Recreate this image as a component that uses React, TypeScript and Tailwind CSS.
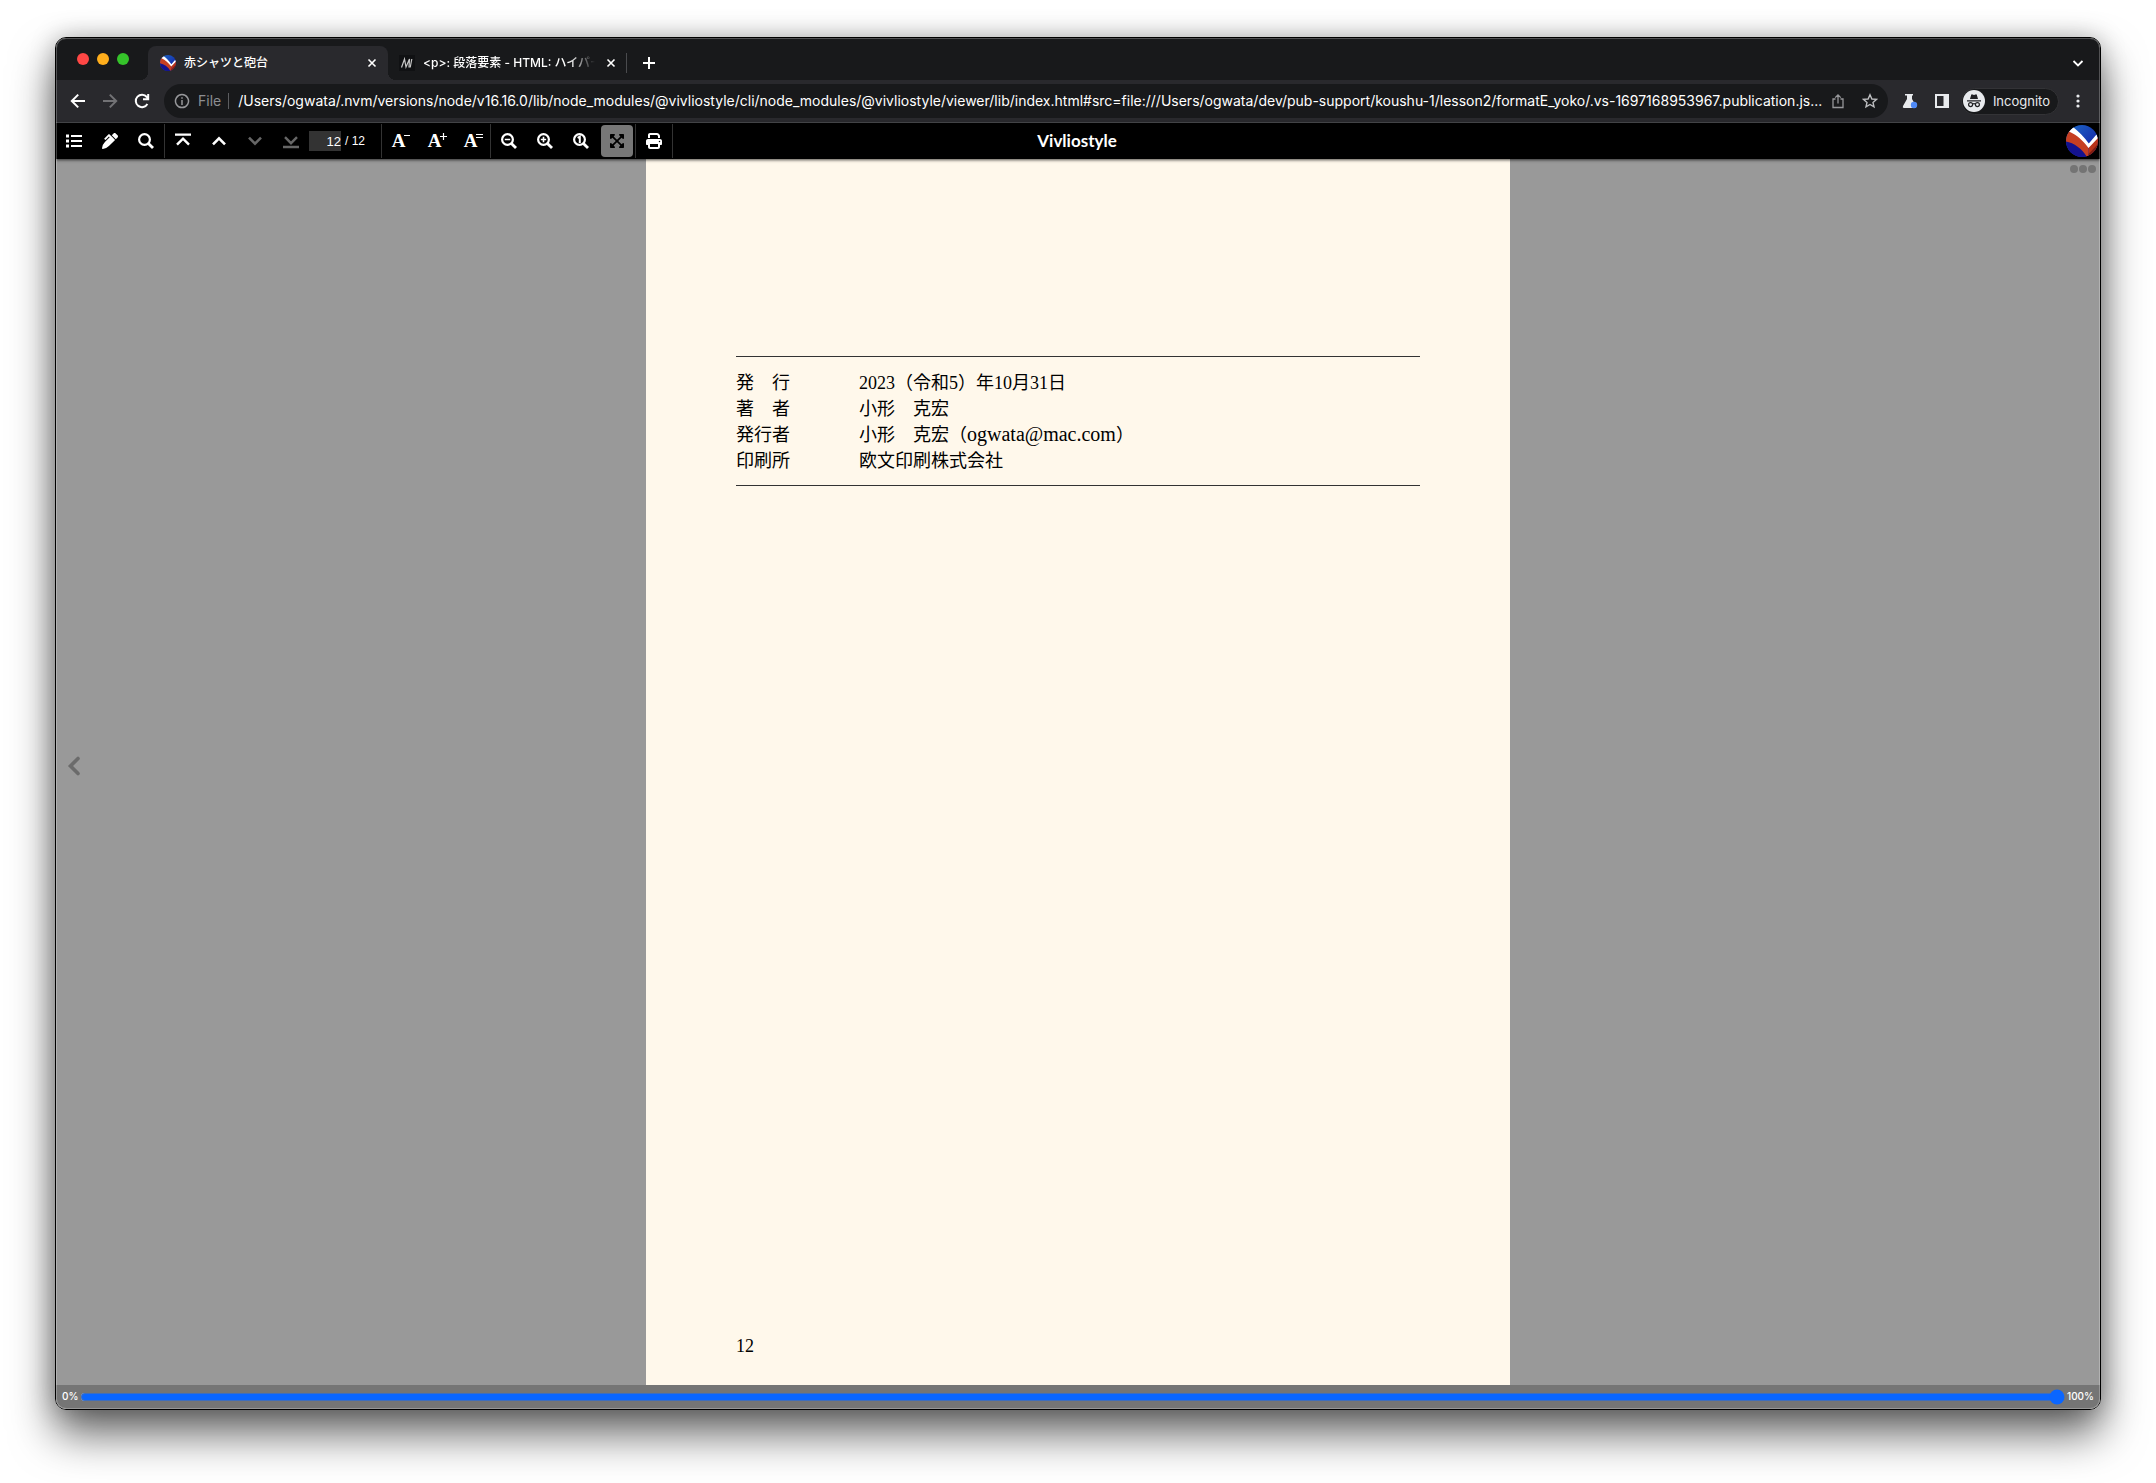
import type { ReactNode } from "react";
import { FaPenAlt, FaExpandArrowsAlt } from "react-icons/fa";
import { FaPrint } from "react-icons/fa6";

const URL_TEXT =
  "/Users/ogwata/.nvm/versions/node/v16.16.0/lib/node_modules/@vivliostyle/cli/node_modules/@vivliostyle/viewer/lib/index.html#src=file:///Users/ogwata/dev/pub-support/koushu-1/lesson2/formatE_yoko/.vs-1697168953967.publication.js...";

const COLOPHON: { label: string; value: ReactNode }[] = [
  { label: "発　行", value: "2023（令和5）年10月31日" },
  { label: "著　者", value: "小形　克宏" },
  {
    label: "発行者",
    value: (
      <>
        小形　克宏（<span className="text-xl leading-none">ogwata@mac.com</span>）
      </>
    ),
  },
  { label: "印刷所", value: "欧文印刷株式会社" },
];

function VivlioLogo({ id, className }: { id: string; className: string }) {
  return (
    <svg viewBox="0 0 32 32" className={className} aria-hidden="true">
      <defs>
        <clipPath id={`${id}-disc`}>
          <circle cx="16" cy="16" r="16" />
        </clipPath>
        <linearGradient id={`${id}-top`} x1="0" y1="0" x2="1" y2="1">
          <stop offset="0" stopColor="#1c6cc8" />
          <stop offset="1" stopColor="#1414a0" />
        </linearGradient>
      </defs>
      <g clipPath={`url(#${id}-disc)`}>
        <rect width="32" height="32" fill={`url(#${id}-top)`} />
        <path d="M0 16 C8 17 16 22 21.5 32 L0 32Z" fill="#14128f" />
        <path d="M0 8 L4 5 C12 8.5 18 14.5 22.5 21.5 L22.5 32 H21 C16 23.5 8 18 0 16.5Z" fill="#c63f22" />
        <path d="M22.5 21.5 L32 12 L32 22 L22.5 32Z" fill="#b83218" />
        <path d="M22.5 29 L32 19 L32 32 L22.5 32Z" fill="#7c1d12" />
        <path d="M3 6.5 L7 2 C13 6.5 18.5 12.5 22.8 18.6 L30.5 9.5 L32 13 L22.5 23 C17 15.5 11 10 3 6.5Z" fill="#fff" />
      </g>
    </svg>
  );
}

function Stroke({ d, size, width = 2, className = "" }: { d: string; size: 12 | 16 | 20; width?: number; className?: string }) {
  const box = size === 12 ? "size-3" : size === 16 ? "size-4" : "size-5";
  return (
    <svg viewBox={`0 0 ${size} ${size}`} className={`${box} shrink-0 ${className}`} fill="none" stroke="currentColor" strokeWidth={width} aria-hidden="true">
      <path d={d} />
    </svg>
  );
}

function Magnifier({ children }: { children?: ReactNode }) {
  return (
    <svg viewBox="0 0 16 16" className="size-4" fill="none" stroke="currentColor" aria-hidden="true">
      <circle cx="6.5" cy="6.5" r="5.4" strokeWidth="2.2" />
      <path d="M10.4 10.4 L15 15" strokeWidth="2.8" />
      {children}
    </svg>
  );
}

function ToolButton({ label, disabled, active, children }: { label: string; disabled?: boolean; active?: boolean; children: ReactNode }) {
  const tone = active ? "bg-[#777777] text-black" : disabled ? "text-[#666666]" : "text-white";
  return (
    <button type="button" aria-label={label} disabled={disabled} className={`mx-0.5 flex size-8 shrink-0 items-center justify-center rounded-sm ${tone}`}>
      {children}
    </button>
  );
}

function FontButton({ label, mark }: { label: string; mark: string }) {
  return (
    <ToolButton label={label}>
      <span className="flex pl-1">
        <span className="font-['Liberation_Serif',serif] text-[19px] leading-6 font-bold">A</span>
        <svg viewBox="0 0 8 8" className="mt-1 -ml-px size-2" fill="none" stroke="currentColor" strokeWidth="1.2" aria-hidden="true">
          <path d={mark} />
        </svg>
      </span>
    </ToolButton>
  );
}

function Group({ children }: { children: ReactNode }) {
  return <div className="flex h-[34px] items-center border-r border-[#333333]">{children}</div>;
}

function TabStrip() {
  return (
    <div className="flex h-[42px] shrink-0 items-end bg-[#18191b] text-xs text-white">
      <div className="flex h-full w-[92px] shrink-0 items-center gap-2 pl-[21px]">
        <button type="button" aria-label="Close window" className="size-3 rounded-full bg-[#ff4745]" />
        <button type="button" aria-label="Minimize window" className="size-3 rounded-full bg-[#ffae1c]" />
        <button type="button" aria-label="Zoom window" className="size-3 rounded-full bg-[#35c32a]" />
      </div>
      <div className="relative flex h-[34px] w-60 shrink-0 items-center rounded-t-lg bg-[#29292d] px-3 before:absolute before:bottom-0 before:-left-2 before:size-2 before:bg-[radial-gradient(circle_at_0_0,#18191b_8px,#29292d_8px)] after:absolute after:-right-2 after:bottom-0 after:size-2 after:bg-[radial-gradient(circle_at_100%_0,#18191b_8px,#29292d_8px)]">
        <VivlioLogo id="tab" className="size-4" />
        <span className="ml-2 flex-1 truncate font-medium">赤シャツと砲台</span>
        <button type="button" aria-label="Close tab" className="-mr-1 flex size-4 items-center justify-center">
          <Stroke size={12} width={1.6} d="M2.5 2.5 L9.5 9.5 M9.5 2.5 L2.5 9.5" />
        </button>
      </div>
      <div className="flex h-[34px] w-[239px] shrink-0 items-center pl-[11px]">
        <svg viewBox="0 0 16 16" className="size-4 shrink-0 bg-[#101113]" fill="none" stroke="#c8c8c8" aria-hidden="true">
          <path d="M2.5 12.5 L5.5 4 L7 12 L10.5 4 L10 12.5 M12.8 4 L11.2 12.5" strokeWidth="1.2" />
        </svg>
        <span className="ml-2 flex-1 overflow-hidden font-medium whitespace-nowrap mask-r-from-85% mask-r-to-100%">&lt;p&gt;: 段落要素 - HTML: ハイパー</span>
        <button type="button" aria-label="Close tab" className="mr-[7px] ml-2 flex size-4 items-center justify-center">
          <Stroke size={12} width={1.6} d="M2.5 2.5 L9.5 9.5 M9.5 2.5 L2.5 9.5" />
        </button>
        <span className="h-5 w-px bg-[#4a4b4e]" />
      </div>
      <button type="button" aria-label="New tab" className="ml-3 flex h-[34px] w-5 items-center justify-center">
        <Stroke size={12} width={2} d="M6 0 V12 M0 6 H12" />
      </button>
      <button type="button" aria-label="Search tabs" className="mr-3.5 ml-auto flex h-[34px] w-4 items-center justify-center">
        <Stroke size={12} width={1.8} d="M1.5 4 L6 8.5 L10.5 4" />
      </button>
    </div>
  );
}

function AddressRow() {
  return (
    <div className="flex h-[43px] shrink-0 items-center border-b border-[#4b4c50] bg-[#29292d] text-sm text-white">
      <div className="flex shrink-0 items-center gap-3 pr-3 pl-3">
        <button type="button" aria-label="Back">
          <Stroke size={20} width={2} d="M17 10 H4 M10.2 3.6 L3.8 10 L10.2 16.4" />
        </button>
        <button type="button" aria-label="Forward" className="text-[#727275]">
          <Stroke size={20} width={2} d="M3 10 H16 M9.8 3.6 L16.2 10 L9.8 16.4" />
        </button>
        <button type="button" aria-label="Reload">
          <Stroke size={20} width={2} d="M15.4 13 A6.2 6.2 0 1 1 14.8 6 L16 7.6 M16.2 3 V8.2 H11" />
        </button>
      </div>
      <div className="flex h-[34px] min-w-0 flex-1 items-center rounded-full bg-[#18191b] pr-2.5 pl-2.5">
        <Stroke size={16} width={1.5} className="text-[#96979a]" d="M8 1.5 A6.5 6.5 0 1 1 7.99 1.5 M8 7 V12 M8 4.2 V5.8" />
        <span className="ml-2 text-[#8d8e91]">File</span>
        <span className="ml-[7px] h-4 w-px bg-[#5c5d60]" />
        <input type="text" aria-label="Address" readOnly value={URL_TEXT} className="ml-[9px] min-w-0 flex-1 bg-transparent outline-none" />
        <div className="flex shrink-0 items-center gap-4">
          <button type="button" aria-label="Share" className="text-[#96979a]">
            <Stroke size={16} width={1.3} d="M5.5 6 H3 V14.5 H13 V6 H10.5 M8 10.5 V1.8 M5.2 4.6 L8 1.8 L10.8 4.6" />
          </button>
          <button type="button" aria-label="Bookmark" className="text-[#bdbec0]">
            <Stroke size={16} width={1.4} d="M8 1.8 L9.9 6 L14.4 6.4 L11 9.4 L12 13.9 L8 11.5 L4 13.9 L5 9.4 L1.6 6.4 L6.1 6 Z" />
          </button>
        </div>
      </div>
      <div className="flex shrink-0 items-center pl-3.5">
        <button type="button" aria-label="Experiments">
          <svg viewBox="0 0 16 16" className="size-4" aria-hidden="true">
            <path d="M3 1 H11 V2.6 H10 V6 L14 13 Q14.5 15 12.8 15 H2 Q0.2 15 1 13 L5 6 V2.6 H3Z" fill="#e8eaed" />
            <circle cx="12" cy="12" r="3.2" fill="#4f8af7" />
          </svg>
        </button>
        <button type="button" aria-label="Side panel" className="ml-4">
          <svg viewBox="0 0 16 16" className="size-4" aria-hidden="true">
            <path d="M1 1 H15 V15 H1Z M3 3 V13 H9.5 V3Z" fill="#e8eaed" fillRule="evenodd" />
          </svg>
        </button>
        <button type="button" className="ml-[11px] flex h-[27px] items-center gap-2 rounded-full border border-[#333336] bg-[#18191b] pr-2 pl-px text-[13px] text-[#e8eaed]">
          <svg viewBox="0 0 22 22" className="size-[22px]" fill="none" stroke="#202124" aria-hidden="true">
            <circle cx="11" cy="11" r="11" fill="#e8eaed" stroke="none" />
            <path d="M7 9 L8.2 4.8 Q8.6 4 9.5 4.4 L11 4.9 L12.5 4.4 Q13.4 4 13.8 4.8 L15 9Z" fill="#202124" stroke="none" />
            <path d="M4 10.8 H18 M9.6 14 Q11 13.2 12.4 14" strokeWidth="1.2" />
            <circle cx="7.6" cy="14.6" r="2" strokeWidth="1.2" />
            <circle cx="14.4" cy="14.6" r="2" strokeWidth="1.2" />
          </svg>
          Incognito
        </button>
        <button type="button" aria-label="Menu" className="mr-3.5 ml-[11px]">
          <svg viewBox="0 0 16 16" className="size-4" fill="#e8eaed" aria-hidden="true">
            <circle cx="8" cy="3" r="1.6" />
            <circle cx="8" cy="8" r="1.6" />
            <circle cx="8" cy="13" r="1.6" />
          </svg>
        </button>
      </div>
    </div>
  );
}

function ViewerBar() {
  return (
    <div className="relative z-10 flex h-9 shrink-0 items-center justify-between bg-black text-white shadow-[0_1px_3px_rgba(0,0,0,0.7)]">
      <div className="flex flex-1 items-center">
        <Group>
          <ToolButton label="Table of contents">
            <svg viewBox="0 0 16 16" className="size-4" fill="currentColor" aria-hidden="true">
              <path d="M0 1.5 H3 V4.5 H0Z M0 6.5 H3 V9.5 H0Z M0 11.5 H3 V14.5 H0Z M5 2 H16 V4 H5Z M5 7 H16 V9 H5Z M5 12 H16 V14 H5Z" />
            </svg>
          </ToolButton>
          <ToolButton label="Marker">
            <FaPenAlt className="size-4" />
          </ToolButton>
          <ToolButton label="Find">
            <Magnifier />
          </ToolButton>
        </Group>
        <Group>
          <ToolButton label="First page">
            <Stroke size={16} width={2.4} d="M0 1.6 H16 M2 11.6 L8 5.6 L14 11.6" />
          </ToolButton>
          <ToolButton label="Previous page">
            <Stroke size={16} width={2.6} d="M2 11.4 L8 5.4 L14 11.4" />
          </ToolButton>
          <ToolButton label="Next page" disabled>
            <Stroke size={16} width={2.6} d="M2 4.6 L8 10.6 L14 4.6" />
          </ToolButton>
          <ToolButton label="Last page" disabled>
            <Stroke size={16} width={2.4} d="M0 14 H16 M2 4.2 L8 10.2 L14 4.2" />
          </ToolButton>
          <input type="text" aria-label="Page number" defaultValue="12" className="h-5 w-8 bg-[#333333] text-right font-['Liberation_Sans',sans-serif] text-[13px] outline-none" />
          <span className="w-10 pl-1 font-['Liberation_Sans',sans-serif] text-xs">/ 12</span>
        </Group>
        <Group>
          <FontButton label="Smaller text" mark="M0 2.5 H6" />
          <FontButton label="Larger text" mark="M0 3.5 H7 M3.5 0 V7" />
          <FontButton label="Default text size" mark="M0 1.5 H7 M0 4.5 H7" />
        </Group>
        <Group>
          <ToolButton label="Zoom out">
            <Magnifier>
              <path d="M3.8 6.5 H9.2" strokeWidth="1.6" />
            </Magnifier>
          </ToolButton>
          <ToolButton label="Zoom in">
            <Magnifier>
              <path d="M3.8 6.5 H9.2 M6.5 3.8 V9.2" strokeWidth="1.6" />
            </Magnifier>
          </ToolButton>
          <ToolButton label="Actual size">
            <Magnifier>
              <path d="M4.6 4.8 L6.8 3.6 V10" strokeWidth="2" />
            </Magnifier>
          </ToolButton>
          <ToolButton label="Fit to screen" active>
            <FaExpandArrowsAlt className="size-4" />
          </ToolButton>
        </Group>
        <Group>
          <ToolButton label="Print">
            <FaPrint className="size-4" />
          </ToolButton>
        </Group>
      </div>
      <h1 className="font-['Lato',sans-serif] text-[17px] font-bold">Vivliostyle</h1>
      <div className="flex flex-1 justify-end pr-0.5">
        <a href="#vivliostyle" aria-label="Vivliostyle">
          <VivlioLogo id="bar" className="size-8" />
        </a>
      </div>
    </div>
  );
}

function Viewport() {
  return (
    <main className="relative flex flex-1 justify-center bg-[#999999]">
      <button type="button" aria-label="Previous page" className="absolute inset-y-0 left-0 flex w-9 items-center justify-center pb-3 text-[#6b6b6b]">
        <svg viewBox="0 0 14 20" className="h-5 w-3.5" fill="none" stroke="currentColor" strokeWidth="3.6" strokeLinecap="round" aria-hidden="true">
          <path d="M11 2.5 L3.5 10 L11 17.5" />
        </svg>
      </button>
      <button type="button" aria-label="More" className="absolute top-1.5 right-1 flex gap-px">
        <span className="size-2 rounded-full bg-[#747474]" />
        <span className="size-2 rounded-full bg-[#747474]" />
        <span className="size-2 rounded-full bg-[#747474]" />
      </button>
      <article lang="ja" className="flex w-full max-w-[864px] flex-col bg-[#fff8eb] px-[90px] pt-[197px] pb-[26px] font-['Liberation_Serif','Noto_Sans_CJK_JP',serif] text-lg leading-[26px] text-black">
        <dl className="grid grid-cols-[123px_1fr] border-y border-[#333333] pt-[13px] pb-[11px]">
          {COLOPHON.map((row) => (
            <div key={row.label} className="col-span-2 grid h-[26px] grid-cols-subgrid">
              <dt>{row.label}</dt>
              <dd>{row.value}</dd>
            </div>
          ))}
        </dl>
        <footer className="mt-auto">12</footer>
      </article>
    </main>
  );
}

export default function App() {
  return (
    <div className="flex min-h-screen bg-white px-[55px] pt-[37px] pb-[73px] font-['Inter','Noto_Sans_CJK_JP',sans-serif]">
      <div className="flex min-w-0 flex-1 rounded-[11px] shadow-[0_24px_44px_rgba(0,0,0,0.6),0_0_24px_rgba(0,0,0,0.25)]">
        <div className="relative flex min-w-0 flex-1 flex-col overflow-hidden rounded-[11px] border border-black after:pointer-events-none after:absolute after:inset-0 after:z-20 after:rounded-[10px] after:border after:border-white/25">
          <TabStrip />
          <AddressRow />
          <ViewerBar />
          <Viewport />
          <div className="flex h-6 shrink-0 items-center gap-0.5 bg-[#757575] px-1.5 pb-px text-[10px] font-medium text-white">
            <label htmlFor="progress">0%</label>
            <input id="progress" type="range" min={0} max={100} defaultValue={100} className="min-w-0 flex-1 accent-[#0a66ff]" />
            <span>100%</span>
          </div>
        </div>
      </div>
    </div>
  );
}
